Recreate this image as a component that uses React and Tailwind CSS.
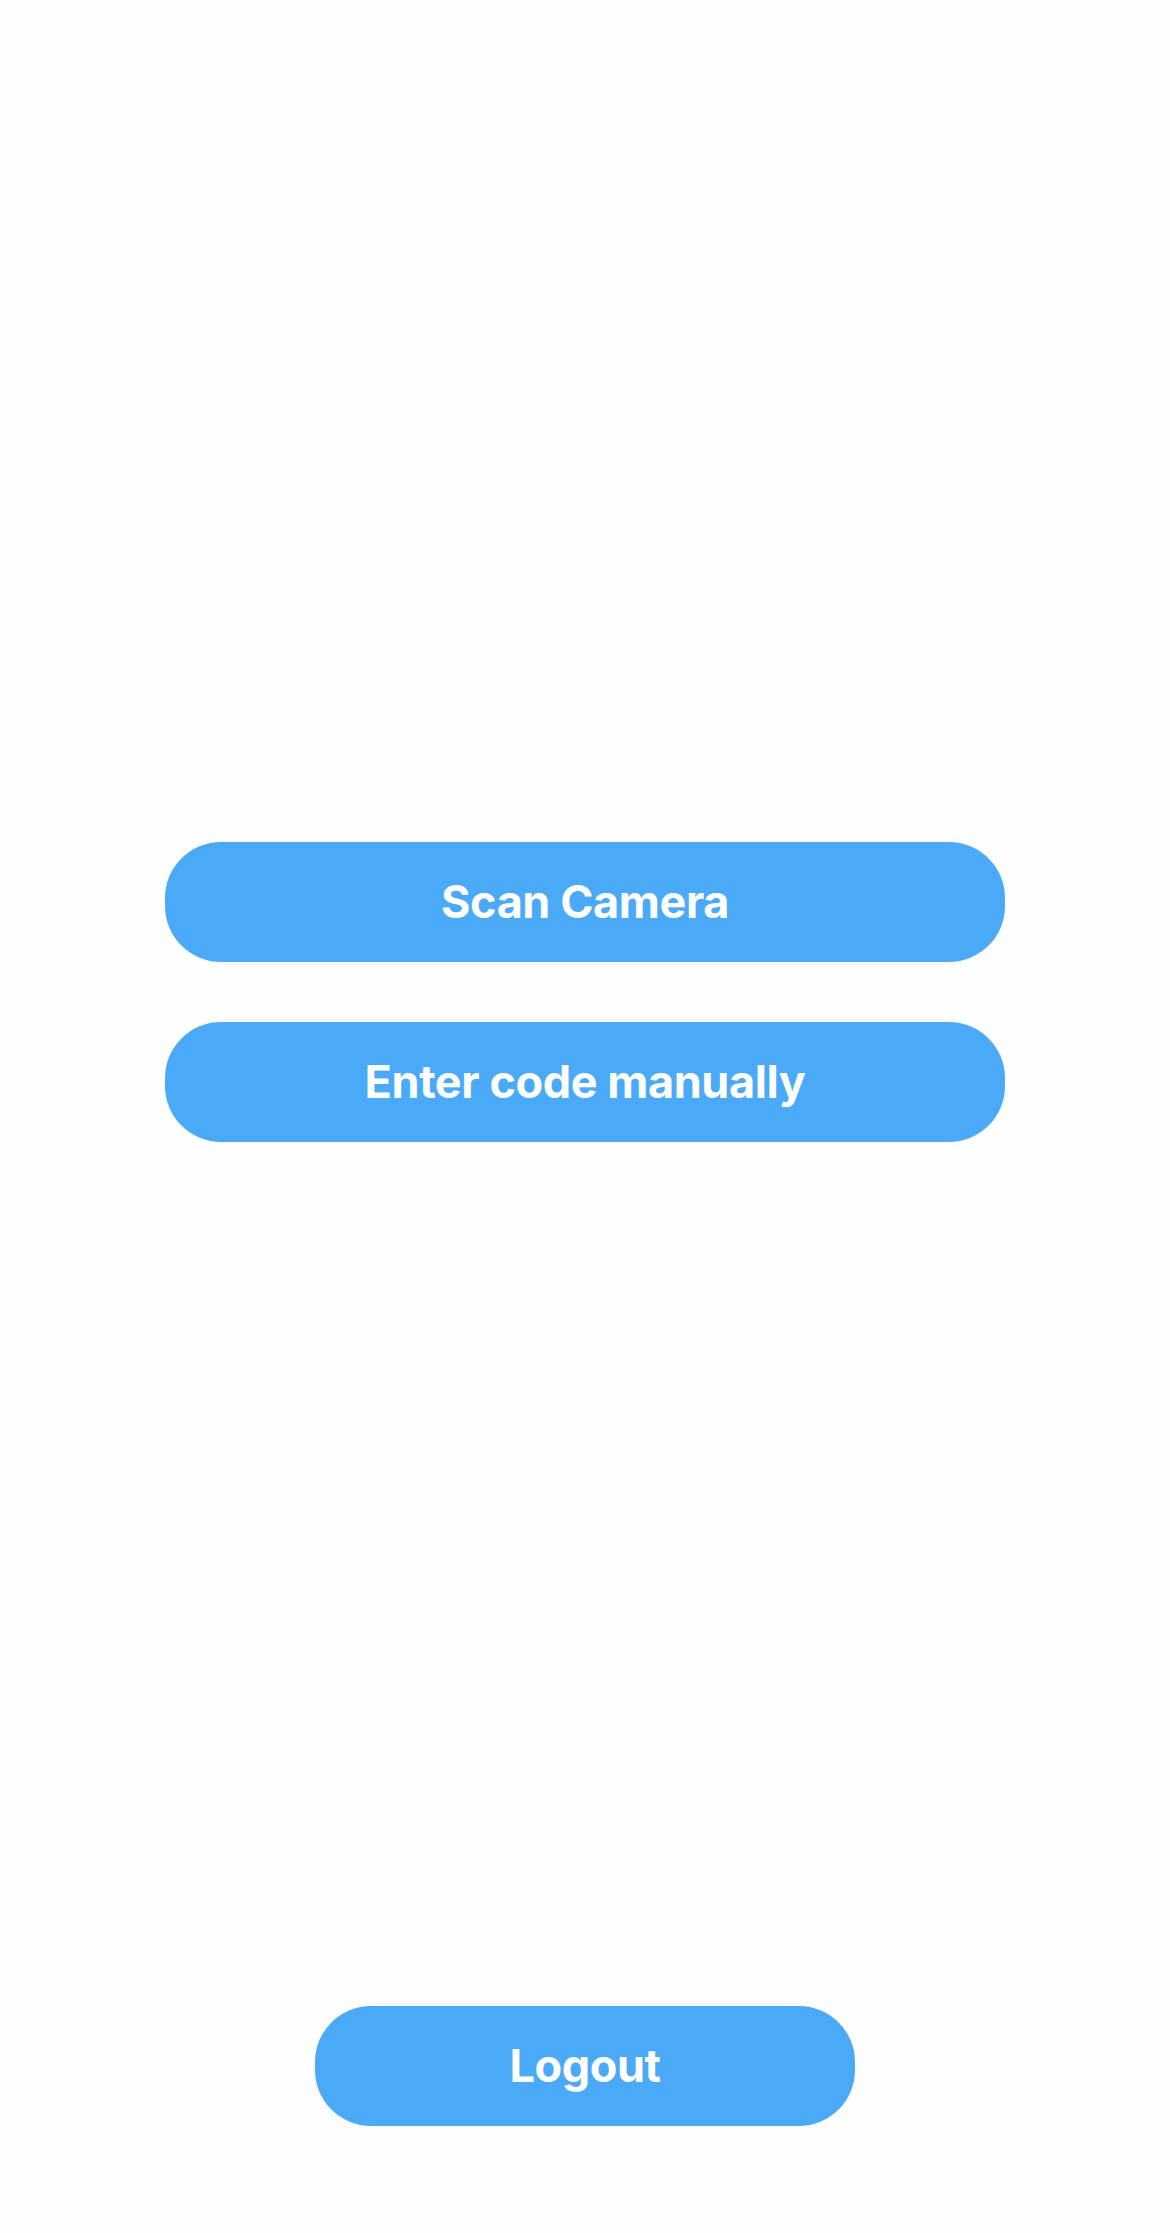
import React from 'react';

// Simple pill button used on the scan screen
const PillButton = ({ label, className = '', onClick }) => (
  <button
    onClick={onClick}
    className={`h-[120px] rounded-[56px] bg-[#4aaaf8] text-white text-[45px] font-bold tracking-[-0.4px] flex items-center justify-center ${className}`}
  >
    {label}
  </button>
);

const App = () => {
  const handleScan = () => {};
  const handleManual = () => {};
  const handleLogout = () => {};

  return (
    <div
      className="w-[1170px] h-[2233px] bg-[#fefefe] flex flex-col items-center"
      style={{ fontFamily: 'Inter, "Noto Sans", sans-serif' }}
    >
      <div className="pt-[842px] flex flex-col gap-[60px]">
        <PillButton label="Scan Camera" className="w-[840px]" onClick={handleScan} />
        <PillButton label="Enter code manually" className="w-[840px]" onClick={handleManual} />
      </div>

      <div className="mt-auto pb-[107px]">
        <PillButton label="Logout" className="w-[540px]" onClick={handleLogout} />
      </div>
    </div>
  );
};

export default App;
